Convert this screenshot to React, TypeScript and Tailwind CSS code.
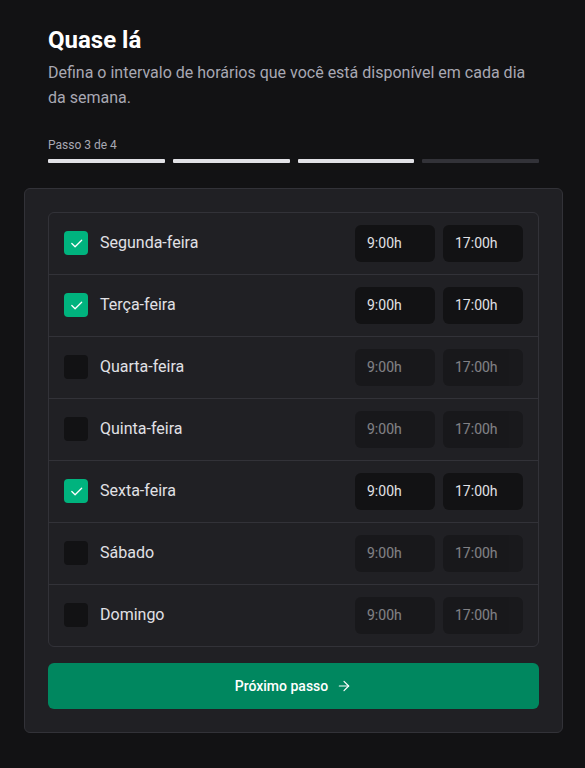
import { ArrowRight } from "lucide-react";

const days = [
  { name: "Segunda-feira", enabled: true },
  { name: "Terça-feira", enabled: true },
  { name: "Quarta-feira", enabled: false },
  { name: "Quinta-feira", enabled: false },
  { name: "Sexta-feira", enabled: true },
  { name: "Sábado", enabled: false },
  { name: "Domingo", enabled: false },
];

function Checkbox({ checked }: { checked: boolean }) {
  return (
    <div
      className={
        checked
          ? "flex h-6 w-6 items-center justify-center rounded bg-[#00B37E]"
          : "flex h-6 w-6 items-center justify-center rounded bg-[#121214]"
      }
    >
      {checked && (
        <svg width="15" height="15" viewBox="0 0 256 256" fill="none">
          <polyline
            points="216 72 104 184 48 128"
            stroke="#fff"
            strokeWidth="22"
            strokeLinecap="round"
            strokeLinejoin="round"
          />
        </svg>
      )}
    </div>
  );
}

function TimeInput({ value, disabled }: { value: string; disabled: boolean }) {
  return (
    <div
      className={
        disabled
          ? "flex h-[37px] w-20 items-center rounded-md bg-[#121214] px-3 text-sm text-[#E1E1E6] opacity-50"
          : "flex h-[37px] w-20 items-center rounded-md bg-[#121214] px-3 text-sm text-[#E1E1E6]"
      }
    >
      {value}
    </div>
  );
}

export default function App() {
  return (
    <main
      className="min-h-screen bg-[#121214] pt-6 pr-[22px] pb-9 pl-6"
      style={{ fontFamily: "Roboto, sans-serif" }}
    >
      <header className="px-6">
        <h1 className="text-2xl leading-[1.4] font-bold text-white">Quase lá</h1>
        <p className="mt-0.5 text-base leading-[1.6] text-[#A8A8B3]">
          Defina o intervalo de horários que você está disponível em cada dia da semana.
        </p>
        <p className="mt-[25px] text-xs leading-[1.6] text-[#A8A8B3]">Passo 3 de 4</p>
        <div className="mt-1 flex gap-2">
          <div className="h-1 flex-1 rounded-[1px] bg-[#E1E1E6]" />
          <div className="h-1 flex-1 rounded-[1px] bg-[#E1E1E6]" />
          <div className="h-1 flex-1 rounded-[1px] bg-[#E1E1E6]" />
          <div className="h-1 flex-1 rounded-[1px] bg-[#323238]" />
        </div>
      </header>

      <section className="mt-[25px] rounded-md border border-[#323238] bg-[#202024] px-[23px] pt-[23px] pb-[23px]">
        <div className="rounded-md border border-[#323238]">
          {days.map((day, i) => (
            <div
              key={day.name}
              className={
                i === 0
                  ? "flex items-center justify-between py-3 pr-[15px] pl-[15px]"
                  : "flex items-center justify-between border-t border-[#323238] py-3 pr-[15px] pl-[15px]"
              }
            >
              <div className="flex items-center gap-3">
                <Checkbox checked={day.enabled} />
                <span className="text-base text-[#E1E1E6]">{day.name}</span>
              </div>
              <div className="flex gap-2">
                <TimeInput value="9:00h" disabled={!day.enabled} />
                <TimeInput value="17:00h" disabled={!day.enabled} />
              </div>
            </div>
          ))}
        </div>

        <button className="mt-4 flex h-[46px] w-full items-center justify-center gap-2 rounded-md bg-[#00875F] text-sm font-medium text-white">
          Próximo passo
          <ArrowRight size={16} strokeWidth={1.75} />
        </button>
      </section>
    </main>
  );
}
